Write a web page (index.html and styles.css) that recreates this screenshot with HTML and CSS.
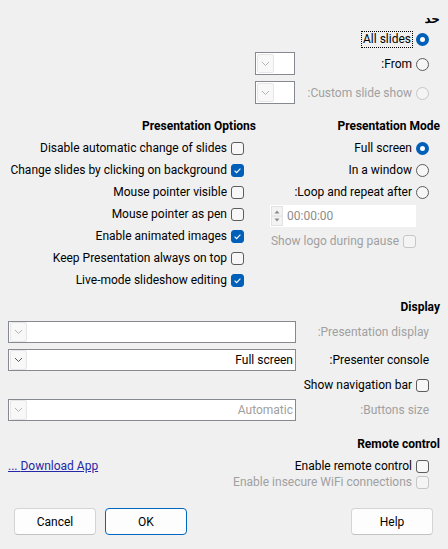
FILE: index.html
```html
<!DOCTYPE html>
<html dir="rtl">
<head>
<meta charset="utf-8">
<link rel="stylesheet" href="styles.css">
</head>
<body>
<div class="dialog">

  <section class="range">
    <div class="heading">حد</div>
    <div class="range-grid">
      <div class="opt"><span class="radio on"></span><span class="focus">All slides</span></div>
      <span></span>
      <div class="opt tall"><span class="radio"></span><span>From:</span></div>
      <div class="mini-combo"><span class="dd dim"><svg width="9" height="6" viewBox="0 0 9 6"><polyline points="1,1 4.5,4.5 8,1" fill="none" stroke="currentColor" stroke-width="1"/></svg></span></div>
      <div class="opt tall dis"><span class="radio dis"></span><span>Custom slide show:</span></div>
      <div class="mini-combo"><span class="dd dim"><svg width="9" height="6" viewBox="0 0 9 6"><polyline points="1,1 4.5,4.5 8,1" fill="none" stroke="currentColor" stroke-width="1"/></svg></span></div>
    </div>
  </section>

  <section class="modes">
    <div class="col mode-col">
      <div class="heading">Presentation Mode</div>
      <div class="list mode-list">
        <div class="row"><span class="radio on"></span><span>Full screen</span></div>
        <div class="row"><span class="radio"></span><span>In a window</span></div>
        <div class="row"><span class="radio"></span><span>Loop and repeat after:</span></div>
        <div class="spin">
          <span class="spin-btns">
            <svg width="12" height="20" viewBox="0 0 12 20">
              <rect x="0.5" y="0.5" width="11" height="19" fill="#f3f3f3" stroke="#e3e3e3"/>
              <line x1="1" y1="10" x2="11" y2="10" stroke="#dcdcdc"/>
              <polygon points="3.5,7.5 8.5,7.5 6,4.5" fill="#8a8a8a"/>
              <polygon points="3.5,12.5 8.5,12.5 6,15.5" fill="#8a8a8a"/>
            </svg>
          </span>
          <span class="spin-val">00:00:00</span>
        </div>
        <div class="row sub dis"><span class="check dis"></span><span>Show logo during pause</span></div>
      </div>
    </div>
    <div class="col opt-col">
      <div class="heading">Presentation Options</div>
      <div class="list opt-list">
        <div class="row"><span class="check"></span><span>Disable automatic change of slides</span></div>
        <div class="row"><span class="check on"><svg width="11" height="11" viewBox="0 0 11 11"><polyline points="2.6,5.6 4.6,7.6 8.4,3.6" fill="none" stroke="#fff" stroke-width="1.1"/></svg></span><span>Change slides by clicking on background</span></div>
        <div class="row"><span class="check"></span><span>Mouse pointer visible</span></div>
        <div class="row"><span class="check"></span><span>Mouse pointer as pen</span></div>
        <div class="row"><span class="check on"><svg width="11" height="11" viewBox="0 0 11 11"><polyline points="2.6,5.6 4.6,7.6 8.4,3.6" fill="none" stroke="#fff" stroke-width="1.1"/></svg></span><span>Enable animated images</span></div>
        <div class="row"><span class="check"></span><span>Keep Presentation always on top</span></div>
        <div class="row"><span class="check on"><svg width="11" height="11" viewBox="0 0 11 11"><polyline points="2.6,5.6 4.6,7.6 8.4,3.6" fill="none" stroke="#fff" stroke-width="1.1"/></svg></span><span>Live-mode slideshow editing</span></div>
      </div>
    </div>
  </section>

  <section class="display">
    <div class="heading">Display</div>
    <div class="display-grid">
      <span class="lbl dis">Presentation display:</span>
      <div class="combo"><span class="dd dim"><svg width="9" height="6" viewBox="0 0 9 6"><polyline points="1,1 4.5,4.5 8,1" fill="none" stroke="currentColor" stroke-width="1"/></svg></span><span class="combo-val"></span></div>
      <span class="lbl">Presenter console:</span>
      <div class="combo"><span class="dd"><svg width="9" height="6" viewBox="0 0 9 6"><polyline points="1,1 4.5,4.5 8,1" fill="none" stroke="currentColor" stroke-width="1"/></svg></span><span class="combo-val">Full screen</span></div>
      <div class="row nav"><span class="check"></span><span>Show navigation bar</span></div>
      <span class="lbl dis">Buttons size:</span>
      <div class="combo"><span class="dd dim"><svg width="9" height="6" viewBox="0 0 9 6"><polyline points="1,1 4.5,4.5 8,1" fill="none" stroke="currentColor" stroke-width="1"/></svg></span><span class="combo-val dis">Automatic</span></div>
    </div>
  </section>

  <section class="remote">
    <div class="heading">Remote control</div>
    <div class="remote-body">
      <div class="remote-checks">
        <div class="row short"><span class="check"></span><span>Enable remote control</span></div>
        <div class="row short dis"><span class="check dis"></span><span>Enable insecure WiFi connections</span></div>
      </div>
      <a class="link" href="#">Download App ...</a>
    </div>
  </section>

  <div class="buttons">
    <button class="btn">Help</button>
    <div class="btn-group">
      <button class="btn default">OK</button>
      <button class="btn">Cancel</button>
    </div>
  </div>

</div>
</body>
</html>
```
FILE: styles.css
```css
html, body {
  margin: 0;
  background: #f0f0f0;
}
body {
  font-family: Roboto, "DejaVu Sans", sans-serif;
  font-size: 12px;
  line-height: 16px;
  color: #000;
}
.dialog {
  box-sizing: border-box;
  height: 549px;
  padding: 11px 8px 0 8px;
  overflow: hidden;
}
.heading {
  font-weight: 700;
  height: 16px;
  line-height: 16px;
  white-space: nowrap;
}
.dis { color: #a0a0a0; }

/* radio / checkbox */
.radio {
  box-sizing: border-box;
  flex: none;
  width: 13px;
  height: 13px;
  border-radius: 50%;
  border: 1px solid #5c5c5c;
  background: #f6f6f6;
}
.radio.on {
  border: 4px solid #005fb8;
  background: #fff;
}
.radio.dis {
  border-color: #c6c6c6;
  background: #f4f4f4;
}
.check {
  box-sizing: border-box;
  flex: none;
  width: 13px;
  height: 13px;
  border-radius: 3px;
  border: 1px solid #5c5c5c;
  background: #f7f7f7;
  display: flex;
  align-items: center;
  justify-content: center;
}
.check.on {
  border-color: #005fb8;
  background: #005fb8;
}
.check.dis {
  border-color: #c6c6c6;
  background: #f4f4f4;
}

/* range */
.range-grid {
  display: grid;
  grid-template-columns: 134px 40px;
  grid-template-rows: 18px 27px 29px;
  align-items: end;
  margin: 3px 11px 0 0;
}
.opt {
  display: flex;
  align-items: center;
  gap: 4px;
  height: 18px;
  white-space: nowrap;
}
.opt.tall { height: 22px; }
.focus {
  outline: 1px dotted #000;
  outline-offset: 0;
  padding: 0 1px;
  line-height: 15px;
}
.mini-combo {
  box-sizing: border-box;
  width: 40px;
  height: 23px;
  border: 1px solid #868a90;
  background: #fff;
  display: flex;
  direction: ltr;
  padding: 1px;
}
.dd {
  box-sizing: border-box;
  width: 17px;
  height: 19px;
  border: 1px solid #e6e6e6;
  border-radius: 2px;
  background: #f8f8f8;
  color: #5a5a5a;
  display: flex;
  align-items: center;
  justify-content: center;
  flex: none;
}
.dd.dim { color: #b4b4b4; }

/* modes */
.modes {
  display: grid;
  grid-template-columns: 178px 248px;
  column-gap: 6px;
  margin-top: 14px;
}
.list { margin-top: 3px; }
.mode-list { margin-right: 11px; }
.opt-list { margin-right: 12px; }
.row {
  display: flex;
  align-items: center;
  gap: 4px;
  height: 22px;
  white-space: nowrap;
}
.spin {
  direction: ltr;
  box-sizing: border-box;
  width: 146px;
  height: 22px;
  margin: 2px 13px 0 0;
  background: #fff;
  display: flex;
  align-items: center;
  padding-left: 1px;
}
.spin-btns { display: flex; }
.spin-val {
  color: #8c8c8c;
  margin-left: 4px;
}
.row.sub {
  margin: 3px 13px 0 0;
}

/* display */
.display { margin-top: 8px; }
.display-grid {
  display: grid;
  grid-template-columns: 1fr 288px;
  grid-template-rows: 22px 22px 16px 22px;
  row-gap: 6px;
  column-gap: 6px;
  align-items: center;
  margin: 6px 11px 0 0;
}
.lbl { white-space: nowrap; }
.row.nav {
  grid-column: 1 / -1;
  justify-self: start;
  height: 16px;
}
.combo {
  box-sizing: border-box;
  height: 22px;
  border: 1px solid #868a90;
  background: #fff;
  display: flex;
  align-items: center;
  direction: ltr;
  padding: 0 0 0 1px;
}
.combo .dd { height: 20px; }
.combo-val {
  flex: 1;
  text-align: right;
  padding-right: 2px;
  white-space: nowrap;
}

/* remote */
.remote { margin-top: 15px; }
.remote-body {
  display: flex;
  justify-content: space-between;
  align-items: flex-start;
  margin-top: 6px;
}
.remote-checks { margin-right: 11px; }
.row.short { height: 16px; }
.link {
  color: #2626a6;
  text-decoration: underline;
  line-height: 16px;
  white-space: nowrap;
}

/* buttons */
.buttons {
  display: flex;
  justify-content: space-between;
  margin-top: 18px;
  padding: 0 7px 0 6px;
}
.btn-group {
  display: flex;
  gap: 9px;
}
.btn {
  box-sizing: border-box;
  width: 82px;
  height: 27px;
  border: 1px solid #d4d4d4;
  border-bottom-color: #c2c2c2;
  border-radius: 4px;
  background: #fdfdfd;
  font-family: Roboto, "DejaVu Sans", sans-serif;
  font-size: 12px;
  color: #000;
  padding: 0;
}
.btn.default {
  border: 1px solid #0067c0;
}
```
